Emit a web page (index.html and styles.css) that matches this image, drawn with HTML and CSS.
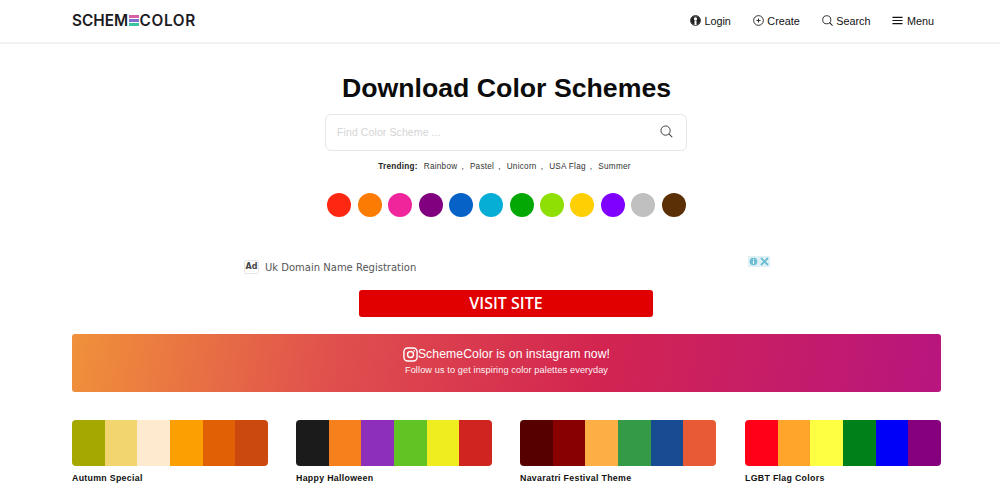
FILE: index.html
```html
<!DOCTYPE html>
<html lang="en">
<head>
<meta charset="utf-8">
<title>SchemeColor</title>
<link rel="stylesheet" href="styles.css">
</head>
<body>
<header class="topbar">
  <div class="logo"><span>SCHEM</span><span class="logo-bars"><i class="bar-a"></i><i class="bar-b"></i><i class="bar-c"></i></span><span class="logo-end">COLOR</span></div>
  <nav class="nav">
    <a class="nav-item"><svg class="nav-icon" viewBox="0 0 12 12"><circle cx="6" cy="6" r="5.4" fill="none" stroke="#222" stroke-width="1"/><path d="M3.6 1.4A5.2 5.2 0 0 0 3.6 10.6H8.4A5.2 5.2 0 0 0 8.4 1.4Z" fill="#222"/><circle cx="6" cy="4.2" r="1.8" fill="#fff"/><path d="M4.9 6h2.2v4.8H4.9z" fill="#fff"/></svg>Login</a>
    <a class="nav-item"><svg class="nav-icon" viewBox="0 0 12 12"><circle cx="6" cy="6" r="5.3" fill="none" stroke="#222" stroke-width="1"/><path d="M6 3.8v4.4M3.8 6h4.4" stroke="#222" stroke-width="1"/></svg>Create</a>
    <a class="nav-item"><svg class="nav-icon" viewBox="0 0 12 12"><circle cx="5.2" cy="5.2" r="4.4" fill="none" stroke="#222" stroke-width="1"/><path d="M8.3 8.3l3.2 3.2" stroke="#222" stroke-width="1.1"/></svg>Search</a>
    <a class="nav-item"><svg class="nav-icon" viewBox="0 0 12 12"><path d="M.5 2.5h11M.5 6h11M.5 9.5h11" stroke="#111" stroke-width="1.3"/></svg>Menu</a>
  </nav>
</header>

<main class="page">
  <h1 class="title">Download Color Schemes</h1>
  <div class="search">
    <span class="placeholder">Find Color Scheme ...</span>
    <svg class="search-icon" viewBox="0 0 14 14"><circle cx="6" cy="6" r="5" fill="none" stroke="#333" stroke-width="1"/><path d="M9.6 9.6l3.6 3.6" stroke="#333" stroke-width="1.1"/></svg>
  </div>
  <div class="trending">
    <b>Trending:</b><span>Rainbow</span><em>,</em><span>Pastel</span><em>,</em><span>Unicorn</span><em>,</em><span>USA Flag</span><em>,</em><span>Summer</span>
  </div>
  <div class="dots">
    <i class="dot c1"></i><i class="dot c2"></i><i class="dot c3"></i><i class="dot c4"></i><i class="dot c5"></i><i class="dot c6"></i><i class="dot c7"></i><i class="dot c8"></i><i class="dot c9"></i><i class="dot c10"></i><i class="dot c11"></i><i class="dot c12"></i>
  </div>

  <section class="ad">
    <div class="ad-row">
      <div class="ad-left"><span class="ad-badge">Ad</span><span class="ad-text">Uk Domain Name Registration</span></div>
      <div class="ad-choices">
        <svg viewBox="0 0 11 11"><rect width="11" height="11" fill="#dff1f5"/><circle cx="5.5" cy="5.5" r="3.8" fill="#6bbdd3"/><path d="M5.5 4.8v3M5.5 3v1" stroke="#fff" stroke-width="1.1"/></svg>
        <svg viewBox="0 0 11 11"><rect width="11" height="11" fill="#dff1f5"/><path d="M2 2l7 7M9 2l-7 7" stroke="#6bbdd3" stroke-width="1.8"/></svg>
      </div>
    </div>
    <div class="visit">VISIT SITE</div>
  </section>

  <section class="banner">
    <div class="banner-head"><svg class="insta" viewBox="0 0 16 16"><rect x="1" y="1" width="14" height="14" rx="4" fill="none" stroke="#fff" stroke-width="1.5"/><circle cx="8" cy="8" r="3.2" fill="none" stroke="#fff" stroke-width="1.5"/><circle cx="12" cy="4" r=".9" fill="#fff"/></svg>SchemeColor is on instagram now!</div>
    <div class="banner-sub">Follow us to get inspiring color palettes everyday</div>
  </section>

  <section class="palettes">
    <article class="palette">
      <div class="swatches"><i class="s-a1"></i><i class="s-a2"></i><i class="s-a3"></i><i class="s-a4"></i><i class="s-a5"></i><i class="s-a6"></i></div>
      <h2 class="palette-name">Autumn Special</h2>
    </article>
    <article class="palette">
      <div class="swatches"><i class="s-b1"></i><i class="s-b2"></i><i class="s-b3"></i><i class="s-b4"></i><i class="s-b5"></i><i class="s-b6"></i></div>
      <h2 class="palette-name">Happy Halloween</h2>
    </article>
    <article class="palette">
      <div class="swatches"><i class="s-c1"></i><i class="s-c2"></i><i class="s-c3"></i><i class="s-c4"></i><i class="s-c5"></i><i class="s-c6"></i></div>
      <h2 class="palette-name">Navaratri Festival Theme</h2>
    </article>
    <article class="palette palette-last">
      <div class="swatches"><i class="s-d1"></i><i class="s-d2"></i><i class="s-d3"></i><i class="s-d4"></i><i class="s-d5"></i><i class="s-d6"></i></div>
      <h2 class="palette-name">LGBT Flag Colors</h2>
    </article>
  </section>
</main>
</body>
</html>
```
FILE: styles.css
```css
* { box-sizing: border-box; }
html, body { margin: 0; padding: 0; height: 500px; overflow: hidden; background: #fff; }
body { font-family: "Liberation Sans", Arial, sans-serif; color: #111; }

.topbar {
  height: 44px;
  padding: 0 66px 1px 72px;
  border-bottom: 2px solid #f1f1f1;
  display: flex;
  align-items: center;
  justify-content: space-between;
}
.logo {
  display: flex;
  align-items: center;
  font-family: Inter, sans-serif;
  font-weight: 600;
  font-size: 15.3px;
  color: #1b1b1f;
}
.logo-end { letter-spacing: .7px; }
.logo-bars { display: flex; flex-direction: column; gap: 1.5px; width: 10px; margin: 0 1px 0 .5px; }
.logo-bars i { display: block; height: 2.5px; }
.bar-a { background: #d75fa6; }
.bar-b { background: #7e6fd0; }
.bar-c { background: #3cc1a1; }

.nav { display: flex; gap: 22px; }
.nav-item { display: flex; align-items: center; gap: 3.5px; font-size: 10.8px; color: #111; }
.nav-icon { width: 11px; height: 11px; }

.page { padding: 0 59px 0 72px; }
.title {
  margin: 27px 0 0;
  text-align: center;
  font-size: 26.7px;
  line-height: 34px;
  font-weight: 700;
  color: #0c0c0c;
}
.search {
  width: 362px;
  height: 37px;
  margin: 9px 0 0 253px;
  padding: 0 13px 2px 11px;
  border: 1px solid #e6e6e6;
  border-radius: 6px;
  display: flex;
  align-items: center;
  justify-content: space-between;
}
.placeholder { font-size: 10.5px; color: #d4d4d4; letter-spacing: .1px; }
.search-icon { width: 13px; height: 13px; }

.trending {
  margin: 10px 0 0;
  padding-right: 4px;
  height: 10px;
  display: flex;
  justify-content: center;
  align-items: center;
  font-size: 8.2px;
  letter-spacing: .25px;
  color: #333;
}
.trending b { margin-right: 6px; color: #222; }
.trending em { font-style: normal; margin: 0 6px 0 4px; }

.dots { display: flex; justify-content: center; gap: 6.4px; margin-top: 22px; }
.dot { display: block; width: 24px; height: 24px; border-radius: 50%; }
.c1 { background: #fe2712; } .c2 { background: #fc7b03; } .c3 { background: #f0259c; } .c4 { background: #800080; }
.c5 { background: #0762c8; } .c6 { background: #06aed5; } .c7 { background: #04a804; } .c8 { background: #8fdf04; }
.c9 { background: #fecf03; } .c10 { background: #8000ff; } .c11 { background: #c0c0c0; } .c12 { background: #5c3006; }

.ad { margin: 0; padding-top: 43px; height: 117px; width: 869px; }
.ad-row { width: 527px; margin-left: 171px; display: flex; justify-content: space-between; align-items: flex-start; }
.ad-left { display: flex; align-items: center; gap: 6px; padding-left: 1px; }
.ad-badge {
  font-family: "DejaVu Sans", sans-serif;
  font-size: 8px;
  font-weight: 700;
  color: #444;
  padding: 1px 0;
  width: 15px;
  text-align: center;
  border: 1px solid #e8e8e8;
  border-radius: 2px;
  line-height: 10px;
}
.ad-text { font-family: "DejaVu Sans", sans-serif; font-size: 10px; color: #555; }
.ad-choices { display: flex; margin-top: -4px; }
.ad-choices svg { display: block; width: 11px; height: 11px; }
.visit {
  width: 294px;
  height: 27px;
  margin: 16px 0 0 287px;
  background: #e00000;
  border-radius: 3px;
  color: #fff;
  font-family: "Open Sans", sans-serif;
  font-weight: 600;
  font-size: 16px;
  line-height: 26px;
  text-align: center;
}

.banner {
  width: 869px;
  height: 58px;
  border-radius: 3px;
  background: linear-gradient(100deg, #f0913a 0%, #e0504d 30%, #d32550 60%, #b8157f 100%);
  color: #fff;
  text-align: center;
  padding-top: 12px;
}
.banner-head { display: flex; justify-content: center; align-items: center; font-size: 12.2px; line-height: 16px; letter-spacing: .1px; }
.insta { width: 15px; height: 15px; }
.banner-sub { font-size: 9.2px; line-height: 12px; margin-top: 2px; opacity: .95; letter-spacing: .1px; }

.palettes { display: flex; gap: 28px; margin-top: 28px; }
.palette { width: 196px; flex: none; }
.palette-last { margin-left: 1px; }
.swatches { display: flex; height: 46px; border-radius: 4px; overflow: hidden; }
.swatches i { display: block; flex: 1; }
.palette-name { margin: 7px 0 0; font-size: 8.8px; line-height: 11px; font-weight: 700; color: #111; letter-spacing: .3px; }

.s-a1 { background: #a4a800; } .s-a2 { background: #f2d56e; } .s-a3 { background: #fdeacf; } .s-a4 { background: #fb9f03; } .s-a5 { background: #e06003; } .s-a6 { background: #cb480e; }
.s-b1 { background: #1b1b1b; } .s-b2 { background: #f5801c; } .s-b3 { background: #8e2fbb; } .s-b4 { background: #62c324; } .s-b5 { background: #efec20; } .s-b6 { background: #cf2420; }
.s-c1 { background: #560000; } .s-c2 { background: #880000; } .s-c3 { background: #fdaf45; } .s-c4 { background: #359a48; } .s-c5 { background: #174c92; } .s-c6 { background: #e85935; }
.s-d1 { background: #ff0018; } .s-d2 { background: #ffa52c; } .s-d3 { background: #ffff41; } .s-d4 { background: #008018; } .s-d5 { background: #0000f9; } .s-d6 { background: #86007d; }
```
